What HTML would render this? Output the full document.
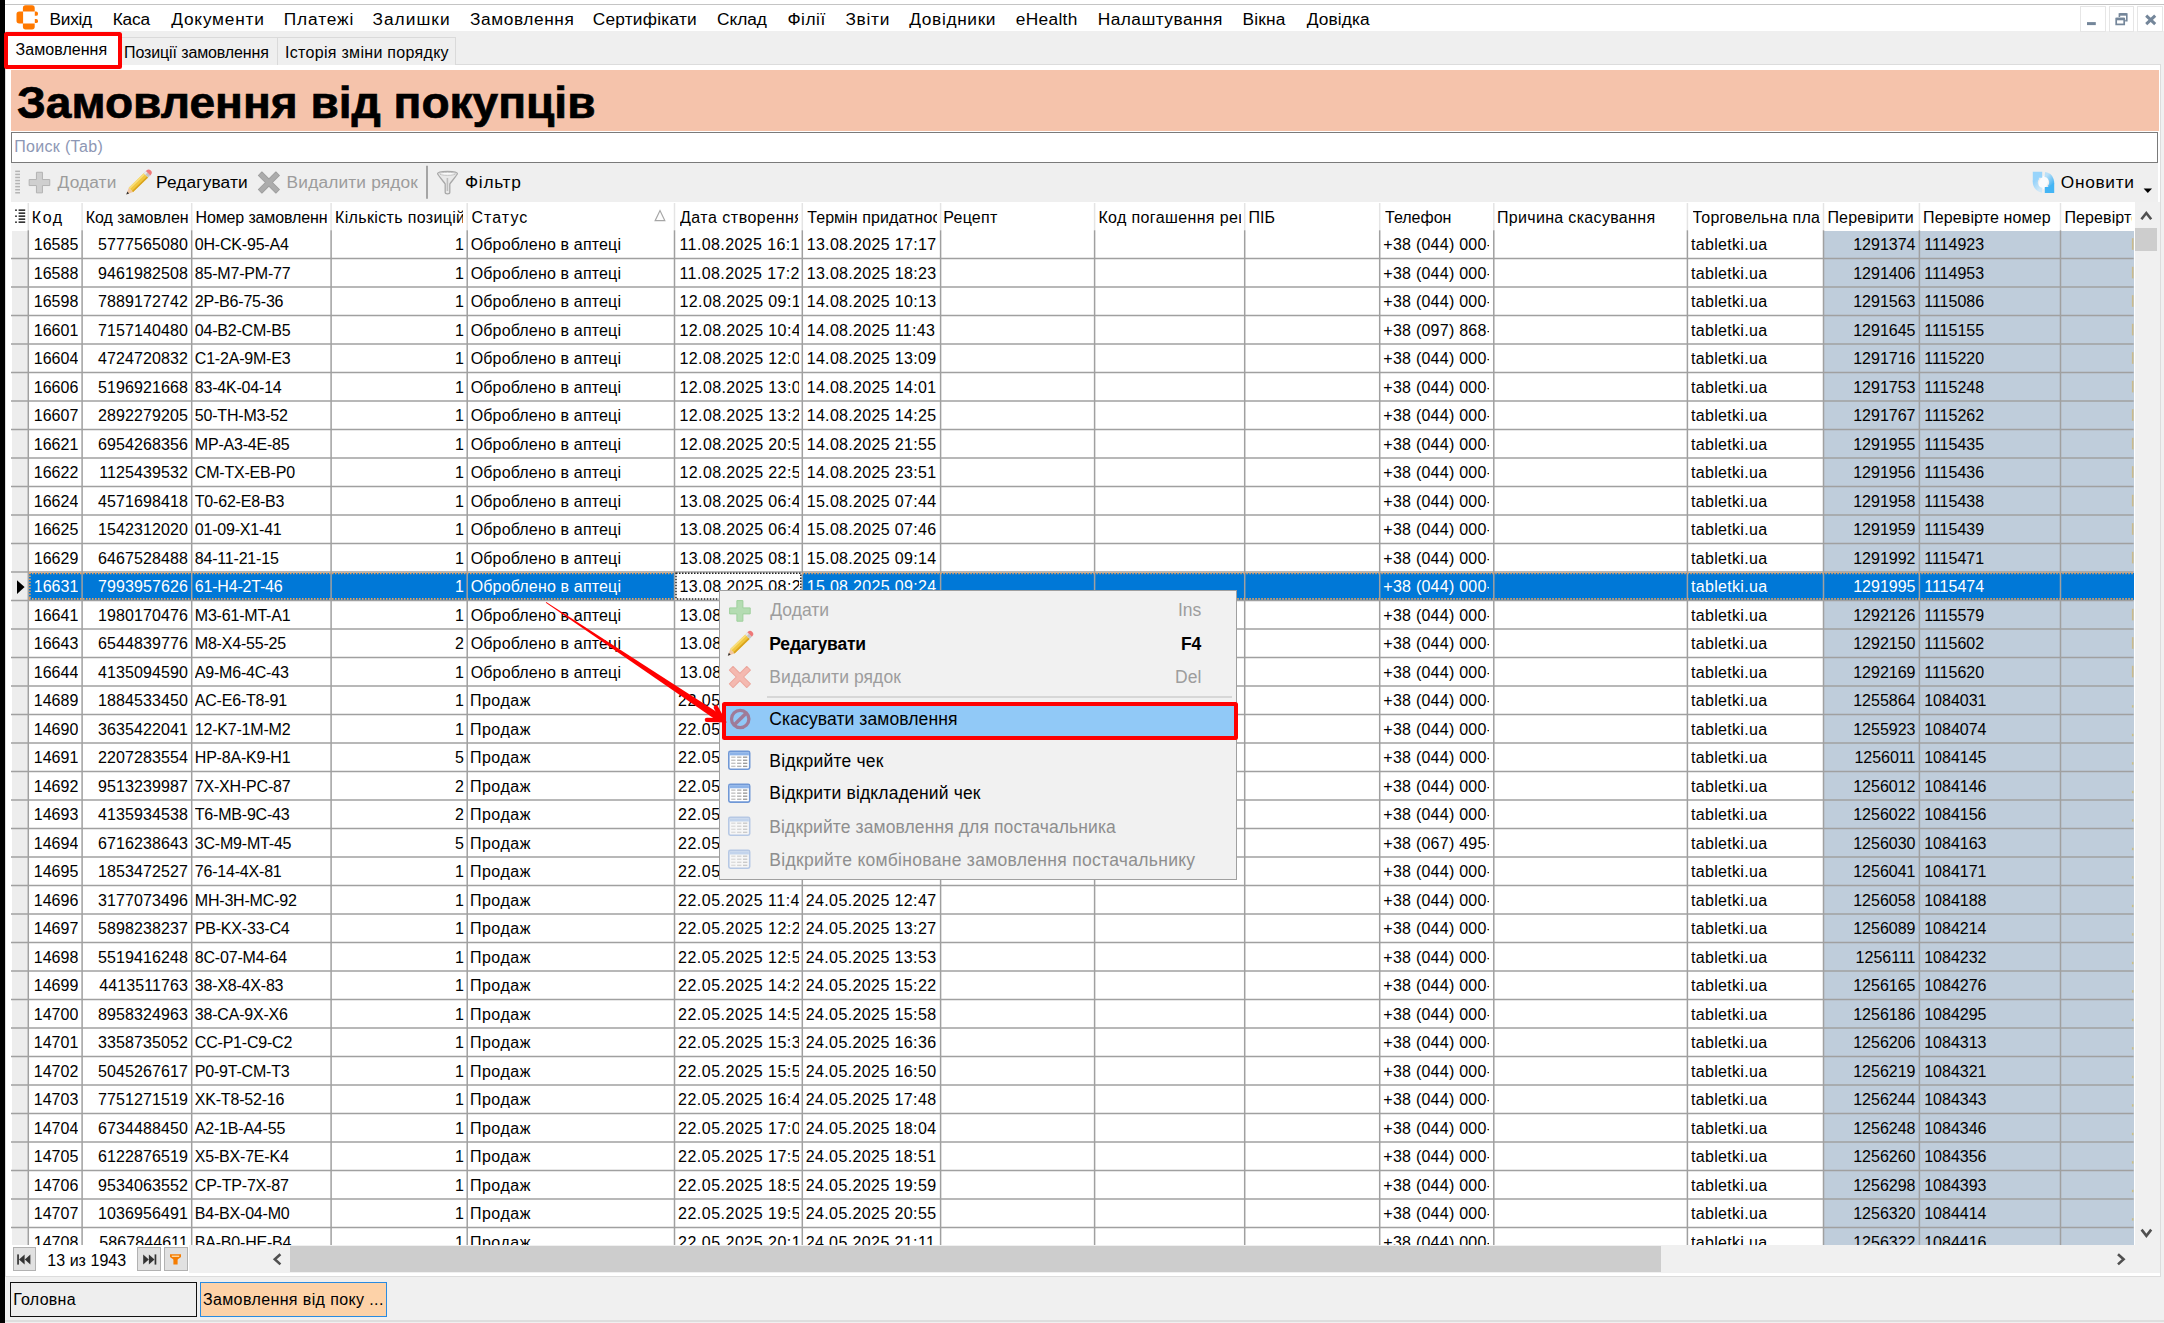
<!DOCTYPE html>
<html lang="uk"><head><meta charset="utf-8"><title>Замовлення від покупців</title>
<style>
html,body{margin:0;padding:0}
body{width:2164px;height:1323px;overflow:hidden;position:relative;background:#f0f0f0;font-family:"Liberation Sans",sans-serif;font-size:16px;color:#000}
.a{position:absolute}
.t{position:absolute;white-space:pre;line-height:20px}
/* top menu */
.mi{position:absolute;top:8px;font-size:17.3px;line-height:22px;white-space:pre;color:#000}
/* toolbar */
.tb{position:absolute;top:171px;font-size:17.3px;line-height:22px;white-space:pre}
/* grid */
.hd{position:absolute;top:205px;height:26px;line-height:26px;font-size:16px;white-space:pre;overflow:hidden}
.r{position:absolute;left:0;width:2134px;height:28.5px}
.r span{position:absolute;top:0.4px;height:28.5px;line-height:28px;font-size:16px;white-space:pre;overflow:hidden}
.r.s span{color:#fff}
.r .k0{left:31.30px;width:47.00px;text-align:right}
.r .k1{left:85.10px;width:102.80px;text-align:right;letter-spacing:0.08px}
.r .k2{left:194.80px;width:132.70px;text-align:left;letter-spacing:-0.20px}
.r .k3{left:334.10px;width:129.90px;text-align:right}
.r .k4{left:470.70px;width:200.20px;text-align:left;letter-spacing:0.16px}
.r .k5{left:679.50px;width:119.80px;text-align:left;letter-spacing:0.39px}
.r .k6{left:806.70px;width:130.30px;text-align:left;letter-spacing:0.32px}
.r .k10{left:1383.30px;width:106.10px;text-align:left;letter-spacing:0.25px}
.r .k12{left:1691.00px;width:128.90px;text-align:left;letter-spacing:0.31px}
.r .k13{left:1826.50px;width:89.00px;text-align:right}
.r .k14{left:1924.20px;width:132.70px;text-align:left}
.r .p{letter-spacing:0.54px;margin-left:-0.8px}
.r .d5{margin-left:-1.5px;width:121.3px;letter-spacing:0.5px}
.r .d6{margin-left:-1px;width:131.3px;letter-spacing:0.39px}
/* context menu */
.cm{position:absolute;font-size:17.5px;line-height:22px;white-space:pre}
</style></head><body>
<div class="a" style="left:0;top:0;width:5.2px;height:1323px;background:#000"></div>
<div class="a" style="left:5.2px;top:0;width:2159px;height:31.3px;background:#fff"></div>
<div class="a" style="left:5.2px;top:3.7px;width:2159px;height:1.4px;background:#c4c4c4"></div>
<div class="a" style="left:5.2px;top:31.3px;width:2159px;height:34px;background:#efefef"></div>
<div class="a" style="left:5.2px;top:64px;width:2154px;height:1211.4px;background:#fff;border:1.5px solid #dcdcdc"></div>
<div class="a" style="left:119px;top:37px;width:158.6px;height:28px;border:1.5px solid #dadada;border-bottom:none;box-sizing:border-box;background:#efefef"></div>
<div class="a" style="left:277.6px;top:37px;width:178.4px;height:28px;border:1.5px solid #dadada;border-left:none;border-bottom:none;box-sizing:border-box;background:#efefef"></div>
<div class="a" style="left:8px;top:35px;width:111px;height:31px;background:#fff"></div>
<div class="t" style="left:15.60px;letter-spacing:0.044px;top:39.5px;">Замовлення</div>
<div class="t" style="left:124.00px;letter-spacing:-0.118px;top:42.5px;">Позиції замовлення</div>
<div class="t" style="left:285.00px;letter-spacing:0.300px;top:42.5px;">Історія зміни порядку</div>
<div class="a" style="left:4.2px;top:32.2px;width:117.8px;height:36.8px;box-sizing:border-box;border:4.2px solid #ff0000;border-radius:2.5px"></div>
<svg class="a" style="left:14px;top:3px" width="28" height="30" viewBox="14 3 28 30"><g fill="#ff7900">
<path d="M22.9 11.4V8a2.7 2.7 0 0 1 2.7-2.7h6.4a2.7 2.7 0 0 1 2.7 2.7v3.4z"/>
<path d="M23.1 11.4h-3.9a2.7 2.7 0 0 0-2.7 2.7v6.6a2.7 2.7 0 0 0 2.7 2.7h3.9z"/>
<path d="M22.9 23.5h11.8v3.2a2.7 2.7 0 0 1-2.7 2.7h-6.4a2.7 2.7 0 0 1-2.7-2.7z"/>
<path d="M34.8 11.6h1.3a1.9 1.9 0 0 1 1.9 1.9v0.4a1.9 1.9 0 0 1-1.9 1.9h-1.3z"/>
<path d="M34.8 19.1h1.3a1.9 1.9 0 0 1 1.9 1.9v0.2a1.9 1.9 0 0 1-1.9 1.9h-1.3z"/>
</g></svg>
<div class="mi" style="left:49.50px;letter-spacing:-0.275px;">Вихід</div>
<div class="mi" style="left:112.70px;letter-spacing:-0.167px;">Каса</div>
<div class="mi" style="left:171.30px;letter-spacing:0.775px;">Документи</div>
<div class="mi" style="left:283.80px;letter-spacing:0.867px;">Платежі</div>
<div class="mi" style="left:372.40px;letter-spacing:1.050px;">Залишки</div>
<div class="mi" style="left:470.00px;letter-spacing:0.589px;">Замовлення</div>
<div class="mi" style="left:592.70px;letter-spacing:0.230px;">Сертифікати</div>
<div class="mi" style="left:717.00px;letter-spacing:-0.050px;">Склад</div>
<div class="mi" style="left:787.40px;letter-spacing:0.550px;">Філії</div>
<div class="mi" style="left:845.40px;letter-spacing:0.725px;">Звіти</div>
<div class="mi" style="left:909.30px;letter-spacing:0.650px;">Довідники</div>
<div class="mi" style="left:1015.70px;letter-spacing:0.350px;">eHealth</div>
<div class="mi" style="left:1097.70px;letter-spacing:0.482px;">Налаштування</div>
<div class="mi" style="left:1242.40px;letter-spacing:0.250px;">Вікна</div>
<div class="mi" style="left:1306.70px;letter-spacing:0.133px;">Довідка</div>
<div class="a" style="left:2080.2px;top:5.8px;width:25.4px;height:26.2px;box-sizing:border-box;border:1.5px solid #e6e6e6;background:#fff"></div>
<div class="a" style="left:2108.6px;top:5.8px;width:25.4px;height:26.2px;box-sizing:border-box;border:1.5px solid #e6e6e6;background:#fff"></div>
<div class="a" style="left:2137.2px;top:5.8px;width:25.4px;height:26.2px;box-sizing:border-box;border:1.5px solid #e6e6e6;background:#fff"></div>
<svg class="a" style="left:2080px;top:6px" width="84" height="27" viewBox="2080 6 84 27"><g fill="none" stroke="#74869a">
<path d="M2087 23.6h8.8" stroke-width="3"/>
<path d="M2119.4 17v-3h7.4v6.6h-1.6" stroke-width="1.6"/><path d="M2119.4 14.4h7.4" stroke-width="2.6"/>
<rect x="2116.2" y="18.6" width="8" height="5.8" stroke-width="1.7"/><path d="M2116.2 19h8" stroke-width="2.6"/>
<path d="M2146.2 15.6l9 8.6M2155.2 15.6l-9 8.6" stroke-width="3"/>
</g></svg>
<div class="a" style="left:11.2px;top:70.2px;width:2147.6px;height:61px;background:#f5c3ab"></div>
<div class="a" id="ttl" style="left:17px;top:79.1px;font-size:44px;line-height:48px;font-weight:bold;white-space:pre;transform-origin:0 0;transform:scaleX(1.047);-webkit-text-stroke:0.7px #000">Замовлення від покупців</div>
<div class="a" style="left:11.2px;top:131.6px;width:2147.2px;height:31.2px;box-sizing:border-box;border:1.6px solid #7a7a7a;background:#fff"></div>
<div class="t" style="left:14.20px;letter-spacing:0.330px;top:137px;color:#8d97b4;">Поиск (Tab)</div>
<div class="a" style="left:11.2px;top:162.8px;width:2147.2px;height:39.2px;background:#efefef"></div>
<svg class="a" style="left:11px;top:163px" width="520" height="39" viewBox="11 163 520 39">
<rect x="15.2" y="170.60" width="4.8" height="1.5" fill="#b4b4b4"/><rect x="15.2" y="173.66" width="4.8" height="1.5" fill="#b4b4b4"/><rect x="15.2" y="176.72" width="4.8" height="1.5" fill="#b4b4b4"/><rect x="15.2" y="179.78" width="4.8" height="1.5" fill="#b4b4b4"/><rect x="15.2" y="182.84" width="4.8" height="1.5" fill="#b4b4b4"/><rect x="15.2" y="185.90" width="4.8" height="1.5" fill="#b4b4b4"/><rect x="15.2" y="188.96" width="4.8" height="1.5" fill="#b4b4b4"/><rect x="15.2" y="192.02" width="4.8" height="1.5" fill="#b4b4b4"/><g transform="translate(39.45,182.55) rotate(0)"><path d="M-3.00 -10.30h6.00v7.30h7.30v6.00h-7.30v7.30h-6.00v-7.30h-7.30v-6.00h7.30z" fill="#cfcfcf" stroke="#b3b3b3" stroke-width="1.0" stroke-linejoin="round"/></g><g transform="translate(126.30,194.40) rotate(-44.17)"><path d="M0 0L6.49 -3.10L6.49 3.10Z" fill="#f1c6a2"/><path d="M0 0L2.73 -1.30L2.73 1.30Z" fill="#333"/><rect x="6.49" y="-3.10" width="20.84" height="6.20" fill="#f1c73f"/><rect x="6.49" y="-3.10" width="20.84" height="1.86" fill="#f8de7c"/><rect x="6.49" y="1.49" width="20.84" height="1.61" fill="#d8a21e"/><rect x="27.33" y="-3.10" width="3.07" height="6.20" fill="#c4c4c4"/><rect x="27.33" y="-3.10" width="3.07" height="2.17" fill="#e8e8e8"/><path d="M30.40 -3.10H31.06a3.10 3.10 0 0 1 0 6.20H30.40z" fill="#ee7878"/></g><g transform="translate(268.90,182.50) rotate(45)"><path d="M-2.50 -12.40h5.00v9.90h9.90v5.00h-9.90v9.90h-5.00v-9.90h-9.90v-5.00h9.90z" fill="#acacac" stroke="#9e9e9e" stroke-width="1.0" stroke-linejoin="round"/></g><path d="M427 165.8v33" stroke="#8c8c8c" stroke-width="1.5"/><path d="M437.6 173.6c0-3 19.8-3 19.8 0c0 1.6-7 9-7.6 10.4v8.6c0 1.6-4.6 1.6-4.6 0v-8.6c-0.6-1.4-7.6-8.8-7.6-10.4z" fill="#e9e9e9" stroke="#a8a8a8" stroke-width="1.3"/><ellipse cx="447.5" cy="173.8" rx="8" ry="1.5" fill="#fafafa" stroke="#b8b8b8" stroke-width="0.8"/><path d="M447.4 178v13" stroke="#bdbdbd" stroke-width="1.6"/></svg>
<div class="tb" style="left:57.60px;letter-spacing:0.140px;color:#9c9c9c;">Додати</div>
<div class="tb" style="left:156.00px;letter-spacing:0.133px;">Редагувати</div>
<div class="tb" style="left:286.60px;letter-spacing:0.177px;color:#9c9c9c;">Видалити рядок</div>
<div class="tb" style="left:465.00px;letter-spacing:0.700px;">Фільтр</div>
<div class="tb" style="left:2060.80px;letter-spacing:0.700px;">Оновити</div>
<svg class="a" style="left:2030px;top:168px" width="128" height="30" viewBox="2030 168 128 30">
<defs><linearGradient id="rg1" x1="0" y1="0" x2="0.6" y2="1"><stop offset="0" stop-color="#8ccffb"/><stop offset="1" stop-color="#cfe8f8"/></linearGradient>
<linearGradient id="rg2" x1="0.4" y1="0" x2="1" y2="1"><stop offset="0" stop-color="#b9e0f8"/><stop offset="1" stop-color="#3aaff2"/></linearGradient></defs>
<ellipse cx="2043.5" cy="182.4" rx="4.2" ry="7.2" transform="rotate(18 2043.5 182.4)" fill="#fafcfe"/>
<g fill="none">
<path d="M2042.2 190.2a7.8 7.8 0 0 1-4.6-13.2" stroke="url(#rg1)" stroke-width="5"/>
<path d="M2044.8 174.6a7.8 7.8 0 0 1 4.6 13.2" stroke="url(#rg2)" stroke-width="5"/>
</g>
<path d="M2032.8 171.8h9.4v6h-3.4l-6 4z" fill="#98d4fb"/>
<path d="M2054.2 193h-9.4v-6h3.4l6-4z" fill="#43b5f5"/>
<path d="M2143.6 188.6h8.4l-4.2 4.5z" fill="#000"/>
</svg>
<div class="a" style="left:11.0px;top:202.0px;width:2122.6px;height:1043.0px;background:#fff"></div>
<div class="a" style="left:12.2px;top:231.25px;width:15.4px;height:1013.75px;background:#ededed"></div>
<div class="a" style="left:1823.50px;top:230.65px;width:310.10px;height:1014.35px;background:#bfcddb"></div>
<div class="a" style="left:29.00px;top:572.50px;width:2104.60px;height:27.30px;background:#0078d7"></div>
<div class="a" style="left:675.20px;top:572.50px;width:126.40px;height:27.30px;background:#fff"></div>
<svg class="a" style="left:0;top:200px" width="2164" height="1046" viewBox="0 200 2164 1046">
<g stroke="#e4e4e4" stroke-width="1.5"><path d="M28.30 203.0V230.2"/><path d="M82.10 203.0V230.2"/><path d="M191.70 203.0V230.2"/><path d="M331.10 203.0V230.2"/><path d="M467.20 203.0V230.2"/><path d="M674.50 203.0V230.2"/><path d="M802.30 203.0V230.2"/><path d="M940.60 203.0V230.2"/><path d="M1094.60 203.0V230.2"/><path d="M1244.70 203.0V230.2"/><path d="M1379.70 203.0V230.2"/><path d="M1493.80 203.0V230.2"/><path d="M1687.40 203.0V230.2"/><path d="M1823.50 203.0V230.2"/><path d="M1919.40 203.0V230.2"/><path d="M2060.50 203.0V230.2"/></g>
<g stroke="#a0a0a0" stroke-width="1.5"><path d="M28.30 230.35V1245.0"/><path d="M82.10 230.35V1245.0"/><path d="M191.70 230.35V1245.0"/><path d="M331.10 230.35V1245.0"/><path d="M467.20 230.35V1245.0"/><path d="M674.50 230.35V1245.0"/><path d="M802.30 230.35V1245.0"/><path d="M940.60 230.35V1245.0"/><path d="M1094.60 230.35V1245.0"/><path d="M1244.70 230.35V1245.0"/><path d="M1379.70 230.35V1245.0"/><path d="M1493.80 230.35V1245.0"/><path d="M1687.40 230.35V1245.0"/><path d="M1823.50 230.35V1245.0"/><path d="M1919.40 230.35V1245.0"/><path d="M2060.50 230.35V1245.0"/><path d="M11.0 258.40H2133.6"/><path d="M11.0 286.90H2133.6"/><path d="M11.0 315.40H2133.6"/><path d="M11.0 343.90H2133.6"/><path d="M11.0 372.40H2133.6"/><path d="M11.0 400.90H2133.6"/><path d="M11.0 429.40H2133.6"/><path d="M11.0 457.90H2133.6"/><path d="M11.0 486.40H2133.6"/><path d="M11.0 514.90H2133.6"/><path d="M11.0 543.40H2133.6"/><path d="M11.0 571.90H2133.6"/><path d="M11.0 600.40H2133.6"/><path d="M11.0 628.90H2133.6"/><path d="M11.0 657.40H2133.6"/><path d="M11.0 685.90H2133.6"/><path d="M11.0 714.40H2133.6"/><path d="M11.0 742.90H2133.6"/><path d="M11.0 771.40H2133.6"/><path d="M11.0 799.90H2133.6"/><path d="M11.0 828.40H2133.6"/><path d="M11.0 856.90H2133.6"/><path d="M11.0 885.40H2133.6"/><path d="M11.0 913.90H2133.6"/><path d="M11.0 942.40H2133.6"/><path d="M11.0 970.90H2133.6"/><path d="M11.0 999.40H2133.6"/><path d="M11.0 1027.90H2133.6"/><path d="M11.0 1056.40H2133.6"/><path d="M11.0 1084.90H2133.6"/><path d="M11.0 1113.40H2133.6"/><path d="M11.0 1141.90H2133.6"/><path d="M11.0 1170.40H2133.6"/><path d="M11.0 1198.90H2133.6"/><path d="M11.0 1227.40H2133.6"/></g>
<g stroke="#f0a25a" stroke-width="1.6" stroke-dasharray="1.5 1.5" fill="none"><path d="M29.00 573.40H674.5"/><path d="M802.30 573.40H2133.6"/><path d="M29.00 598.90H674.5"/><path d="M802.30 598.90H2133.6"/><path d="M29.90 572.50V599.80"/></g><g stroke="#222" stroke-width="1.5" stroke-dasharray="1.5 1.5" fill="none"><rect x="676.00" y="573.30" width="124.80" height="25.70"/></g><path d="M17 580.20L24.6 587.10L17 594.00z" fill="#000"/><rect x="18.6" y="209.4" width="6.6" height="1.5" fill="#222"/><rect x="15.2" y="209.4" width="1.6" height="1.6" fill="#222"/><rect x="18.6" y="212.4" width="6.6" height="1.5" fill="#222"/><rect x="18.6" y="215.4" width="6.6" height="1.5" fill="#222"/><rect x="15.2" y="215.4" width="1.6" height="1.6" fill="#222"/><rect x="18.6" y="218.4" width="6.6" height="1.5" fill="#222"/><rect x="18.6" y="221.4" width="6.6" height="1.5" fill="#222"/><rect x="15.2" y="221.4" width="1.6" height="1.6" fill="#222"/><path d="M655.2 220.6L660 210.6L664.8 220.6z" fill="#fdfdfd" stroke="#a6a6a6" stroke-width="1.2"/></svg>
<div class="hd" style="left:31.70px;width:46.50px;letter-spacing:1.650px;">Код</div>
<div class="hd" style="left:85.70px;width:102.10px;letter-spacing:-0.000px;">Код замовлення</div>
<div class="hd" style="left:195.50px;width:131.70px;letter-spacing:-0.136px;">Номер замовлення</div>
<div class="hd" style="left:335.00px;width:128.30px;letter-spacing:0.344px;">Кількість позицій</div>
<div class="hd" style="left:471.40px;width:199.20px;letter-spacing:1.060px;">Статус</div>
<div class="hd" style="left:680.00px;width:118.40px;letter-spacing:0.492px;">Дата створення</div>
<div class="hd" style="left:807.20px;width:129.50px;letter-spacing:0.086px;">Термін придатності</div>
<div class="hd" style="left:943.30px;width:147.40px;letter-spacing:0.240px;">Рецепт</div>
<div class="hd" style="left:1098.40px;width:142.40px;letter-spacing:0.373px;">Код погашення рецепта</div>
<div class="hd" style="left:1248.60px;width:127.20px;letter-spacing:-0.050px;">ПІБ</div>
<div class="hd" style="left:1385.00px;width:104.90px;letter-spacing:0.000px;">Телефон</div>
<div class="hd" style="left:1496.90px;width:186.60px;letter-spacing:0.329px;">Причина скасування</div>
<div class="hd" style="left:1692.50px;width:127.10px;letter-spacing:0.229px;">Торговельна платформа</div>
<div class="hd" style="left:1827.40px;width:88.10px;letter-spacing:0.211px;">Перевірити</div>
<div class="hd" style="left:1923.10px;width:133.50px;letter-spacing:0.121px;">Перевірте номер</div>
<div class="hd" style="left:2064.40px;width:67.60px;letter-spacing:0.114px;">Перевірте статус</div>
<div class="r" style="top:230.65px"><span class="k0">16585</span><span class="k1">5777565080</span><span class="k2">0H-CK-95-A4</span><span class="k3">1</span><span class="k4">Оброблено в аптеці</span><span class="k5">11.08.2025 16:1</span><span class="k6">13.08.2025 17:17</span><span class="k10">+38 (044) 000-</span><span class="k12">tabletki.ua</span><span class="k13">1291374</span><span class="k14">1114923</span></div>
<div class="r" style="top:259.15px"><span class="k0">16588</span><span class="k1">9461982508</span><span class="k2">85-M7-PM-77</span><span class="k3">1</span><span class="k4">Оброблено в аптеці</span><span class="k5">11.08.2025 17:2</span><span class="k6">13.08.2025 18:23</span><span class="k10">+38 (044) 000-</span><span class="k12">tabletki.ua</span><span class="k13">1291406</span><span class="k14">1114953</span></div>
<div class="r" style="top:287.65px"><span class="k0">16598</span><span class="k1">7889172742</span><span class="k2">2P-B6-75-36</span><span class="k3">1</span><span class="k4">Оброблено в аптеці</span><span class="k5">12.08.2025 09:1</span><span class="k6">14.08.2025 10:13</span><span class="k10">+38 (044) 000-</span><span class="k12">tabletki.ua</span><span class="k13">1291563</span><span class="k14">1115086</span></div>
<div class="r" style="top:316.15px"><span class="k0">16601</span><span class="k1">7157140480</span><span class="k2">04-B2-CM-B5</span><span class="k3">1</span><span class="k4">Оброблено в аптеці</span><span class="k5">12.08.2025 10:4</span><span class="k6">14.08.2025 11:43</span><span class="k10">+38 (097) 868-</span><span class="k12">tabletki.ua</span><span class="k13">1291645</span><span class="k14">1115155</span></div>
<div class="r" style="top:344.65px"><span class="k0">16604</span><span class="k1">4724720832</span><span class="k2">C1-2A-9M-E3</span><span class="k3">1</span><span class="k4">Оброблено в аптеці</span><span class="k5">12.08.2025 12:0</span><span class="k6">14.08.2025 13:09</span><span class="k10">+38 (044) 000-</span><span class="k12">tabletki.ua</span><span class="k13">1291716</span><span class="k14">1115220</span></div>
<div class="r" style="top:373.15px"><span class="k0">16606</span><span class="k1">5196921668</span><span class="k2">83-4K-04-14</span><span class="k3">1</span><span class="k4">Оброблено в аптеці</span><span class="k5">12.08.2025 13:0</span><span class="k6">14.08.2025 14:01</span><span class="k10">+38 (044) 000-</span><span class="k12">tabletki.ua</span><span class="k13">1291753</span><span class="k14">1115248</span></div>
<div class="r" style="top:401.65px"><span class="k0">16607</span><span class="k1">2892279205</span><span class="k2">50-TH-M3-52</span><span class="k3">1</span><span class="k4">Оброблено в аптеці</span><span class="k5">12.08.2025 13:2</span><span class="k6">14.08.2025 14:25</span><span class="k10">+38 (044) 000-</span><span class="k12">tabletki.ua</span><span class="k13">1291767</span><span class="k14">1115262</span></div>
<div class="r" style="top:430.15px"><span class="k0">16621</span><span class="k1">6954268356</span><span class="k2">MP-A3-4E-85</span><span class="k3">1</span><span class="k4">Оброблено в аптеці</span><span class="k5">12.08.2025 20:5</span><span class="k6">14.08.2025 21:55</span><span class="k10">+38 (044) 000-</span><span class="k12">tabletki.ua</span><span class="k13">1291955</span><span class="k14">1115435</span></div>
<div class="r" style="top:458.65px"><span class="k0">16622</span><span class="k1">1125439532</span><span class="k2">CM-TX-EB-P0</span><span class="k3">1</span><span class="k4">Оброблено в аптеці</span><span class="k5">12.08.2025 22:5</span><span class="k6">14.08.2025 23:51</span><span class="k10">+38 (044) 000-</span><span class="k12">tabletki.ua</span><span class="k13">1291956</span><span class="k14">1115436</span></div>
<div class="r" style="top:487.15px"><span class="k0">16624</span><span class="k1">4571698418</span><span class="k2">T0-62-E8-B3</span><span class="k3">1</span><span class="k4">Оброблено в аптеці</span><span class="k5">13.08.2025 06:4</span><span class="k6">15.08.2025 07:44</span><span class="k10">+38 (044) 000-</span><span class="k12">tabletki.ua</span><span class="k13">1291958</span><span class="k14">1115438</span></div>
<div class="r" style="top:515.65px"><span class="k0">16625</span><span class="k1">1542312020</span><span class="k2">01-09-X1-41</span><span class="k3">1</span><span class="k4">Оброблено в аптеці</span><span class="k5">13.08.2025 06:4</span><span class="k6">15.08.2025 07:46</span><span class="k10">+38 (044) 000-</span><span class="k12">tabletki.ua</span><span class="k13">1291959</span><span class="k14">1115439</span></div>
<div class="r" style="top:544.15px"><span class="k0">16629</span><span class="k1">6467528488</span><span class="k2">84-11-21-15</span><span class="k3">1</span><span class="k4">Оброблено в аптеці</span><span class="k5">13.08.2025 08:1</span><span class="k6">15.08.2025 09:14</span><span class="k10">+38 (044) 000-</span><span class="k12">tabletki.ua</span><span class="k13">1291992</span><span class="k14">1115471</span></div>
<div class="r s" style="top:572.65px"><span class="k0">16631</span><span class="k1">7993957626</span><span class="k2">61-H4-2T-46</span><span class="k3">1</span><span class="k4">Оброблено в аптеці</span><span class="k5" style="color:#000">13.08.2025 08:2</span><span class="k6">15.08.2025 09:24</span><span class="k10">+38 (044) 000-</span><span class="k12">tabletki.ua</span><span class="k13">1291995</span><span class="k14">1115474</span></div>
<div class="r" style="top:601.15px"><span class="k0">16641</span><span class="k1">1980170476</span><span class="k2">M3-61-MT-A1</span><span class="k3">1</span><span class="k4">Оброблено в аптеці</span><span class="k5">13.08.2025 09:4</span><span class="k6">15.08.2025 10:45</span><span class="k10">+38 (044) 000-</span><span class="k12">tabletki.ua</span><span class="k13">1292126</span><span class="k14">1115579</span></div>
<div class="r" style="top:629.65px"><span class="k0">16643</span><span class="k1">6544839776</span><span class="k2">M8-X4-55-25</span><span class="k3">2</span><span class="k4">Оброблено в аптеці</span><span class="k5">13.08.2025 10:0</span><span class="k6">15.08.2025 11:05</span><span class="k10">+38 (044) 000-</span><span class="k12">tabletki.ua</span><span class="k13">1292150</span><span class="k14">1115602</span></div>
<div class="r" style="top:658.15px"><span class="k0">16644</span><span class="k1">4135094590</span><span class="k2">A9-M6-4C-43</span><span class="k3">1</span><span class="k4">Оброблено в аптеці</span><span class="k5">13.08.2025 10:2</span><span class="k6">15.08.2025 11:21</span><span class="k10">+38 (044) 000-</span><span class="k12">tabletki.ua</span><span class="k13">1292169</span><span class="k14">1115620</span></div>
<div class="r" style="top:686.65px"><span class="k0">14689</span><span class="k1">1884533450</span><span class="k2">AC-E6-T8-91</span><span class="k3">1</span><span class="k4 p">Продаж</span><span class="k5 d5">22.05.2025 09:1</span><span class="k6 d6">24.05.2025 10:11</span><span class="k10">+38 (044) 000-</span><span class="k12">tabletki.ua</span><span class="k13">1255864</span><span class="k14">1084031</span></div>
<div class="r" style="top:715.15px"><span class="k0">14690</span><span class="k1">3635422041</span><span class="k2">12-K7-1M-M2</span><span class="k3">1</span><span class="k4 p">Продаж</span><span class="k5 d5">22.05.2025 09:4</span><span class="k6 d6">24.05.2025 10:46</span><span class="k10">+38 (044) 000-</span><span class="k12">tabletki.ua</span><span class="k13">1255923</span><span class="k14">1084074</span></div>
<div class="r" style="top:743.65px"><span class="k0">14691</span><span class="k1">2207283554</span><span class="k2">HP-8A-K9-H1</span><span class="k3">5</span><span class="k4 p">Продаж</span><span class="k5 d5">22.05.2025 10:3</span><span class="k6 d6">24.05.2025 11:31</span><span class="k10">+38 (044) 000-</span><span class="k12">tabletki.ua</span><span class="k13">1256011</span><span class="k14">1084145</span></div>
<div class="r" style="top:772.15px"><span class="k0">14692</span><span class="k1">9513239987</span><span class="k2">7X-XH-PC-87</span><span class="k3">2</span><span class="k4 p">Продаж</span><span class="k5 d5">22.05.2025 10:3</span><span class="k6 d6">24.05.2025 11:32</span><span class="k10">+38 (044) 000-</span><span class="k12">tabletki.ua</span><span class="k13">1256012</span><span class="k14">1084146</span></div>
<div class="r" style="top:800.65px"><span class="k0">14693</span><span class="k1">4135934538</span><span class="k2">T6-MB-9C-43</span><span class="k3">2</span><span class="k4 p">Продаж</span><span class="k5 d5">22.05.2025 10:3</span><span class="k6 d6">24.05.2025 11:38</span><span class="k10">+38 (044) 000-</span><span class="k12">tabletki.ua</span><span class="k13">1256022</span><span class="k14">1084156</span></div>
<div class="r" style="top:829.15px"><span class="k0">14694</span><span class="k1">6716238643</span><span class="k2">3C-M9-MT-45</span><span class="k3">5</span><span class="k4 p">Продаж</span><span class="k5 d5">22.05.2025 10:4</span><span class="k6 d6">24.05.2025 11:43</span><span class="k10">+38 (067) 495-</span><span class="k12">tabletki.ua</span><span class="k13">1256030</span><span class="k14">1084163</span></div>
<div class="r" style="top:857.65px"><span class="k0">14695</span><span class="k1">1853472527</span><span class="k2">76-14-4X-81</span><span class="k3">1</span><span class="k4 p">Продаж</span><span class="k5 d5">22.05.2025 10:5</span><span class="k6 d6">24.05.2025 11:50</span><span class="k10">+38 (044) 000-</span><span class="k12">tabletki.ua</span><span class="k13">1256041</span><span class="k14">1084171</span></div>
<div class="r" style="top:886.15px"><span class="k0">14696</span><span class="k1">3177073496</span><span class="k2">MH-3H-MC-92</span><span class="k3">1</span><span class="k4 p">Продаж</span><span class="k5 d5">22.05.2025 11:4</span><span class="k6 d6">24.05.2025 12:47</span><span class="k10">+38 (044) 000-</span><span class="k12">tabletki.ua</span><span class="k13">1256058</span><span class="k14">1084188</span></div>
<div class="r" style="top:914.65px"><span class="k0">14697</span><span class="k1">5898238237</span><span class="k2">PB-KX-33-C4</span><span class="k3">1</span><span class="k4 p">Продаж</span><span class="k5 d5">22.05.2025 12:2</span><span class="k6 d6">24.05.2025 13:27</span><span class="k10">+38 (044) 000-</span><span class="k12">tabletki.ua</span><span class="k13">1256089</span><span class="k14">1084214</span></div>
<div class="r" style="top:943.15px"><span class="k0">14698</span><span class="k1">5519416248</span><span class="k2">8C-07-M4-64</span><span class="k3">1</span><span class="k4 p">Продаж</span><span class="k5 d5">22.05.2025 12:5</span><span class="k6 d6">24.05.2025 13:53</span><span class="k10">+38 (044) 000-</span><span class="k12">tabletki.ua</span><span class="k13">1256111</span><span class="k14">1084232</span></div>
<div class="r" style="top:971.65px"><span class="k0">14699</span><span class="k1">4413511763</span><span class="k2">38-X8-4X-83</span><span class="k3">1</span><span class="k4 p">Продаж</span><span class="k5 d5">22.05.2025 14:2</span><span class="k6 d6">24.05.2025 15:22</span><span class="k10">+38 (044) 000-</span><span class="k12">tabletki.ua</span><span class="k13">1256165</span><span class="k14">1084276</span></div>
<div class="r" style="top:1000.15px"><span class="k0">14700</span><span class="k1">8958324963</span><span class="k2">38-CA-9X-X6</span><span class="k3">1</span><span class="k4 p">Продаж</span><span class="k5 d5">22.05.2025 14:5</span><span class="k6 d6">24.05.2025 15:58</span><span class="k10">+38 (044) 000-</span><span class="k12">tabletki.ua</span><span class="k13">1256186</span><span class="k14">1084295</span></div>
<div class="r" style="top:1028.65px"><span class="k0">14701</span><span class="k1">3358735052</span><span class="k2">CC-P1-C9-C2</span><span class="k3">1</span><span class="k4 p">Продаж</span><span class="k5 d5">22.05.2025 15:3</span><span class="k6 d6">24.05.2025 16:36</span><span class="k10">+38 (044) 000-</span><span class="k12">tabletki.ua</span><span class="k13">1256206</span><span class="k14">1084313</span></div>
<div class="r" style="top:1057.15px"><span class="k0">14702</span><span class="k1">5045267617</span><span class="k2">P0-9T-CM-T3</span><span class="k3">1</span><span class="k4 p">Продаж</span><span class="k5 d5">22.05.2025 15:5</span><span class="k6 d6">24.05.2025 16:50</span><span class="k10">+38 (044) 000-</span><span class="k12">tabletki.ua</span><span class="k13">1256219</span><span class="k14">1084321</span></div>
<div class="r" style="top:1085.65px"><span class="k0">14703</span><span class="k1">7751271519</span><span class="k2">XK-T8-52-16</span><span class="k3">1</span><span class="k4 p">Продаж</span><span class="k5 d5">22.05.2025 16:4</span><span class="k6 d6">24.05.2025 17:48</span><span class="k10">+38 (044) 000-</span><span class="k12">tabletki.ua</span><span class="k13">1256244</span><span class="k14">1084343</span></div>
<div class="r" style="top:1114.15px"><span class="k0">14704</span><span class="k1">6734488450</span><span class="k2">A2-1B-A4-55</span><span class="k3">1</span><span class="k4 p">Продаж</span><span class="k5 d5">22.05.2025 17:0</span><span class="k6 d6">24.05.2025 18:04</span><span class="k10">+38 (044) 000-</span><span class="k12">tabletki.ua</span><span class="k13">1256248</span><span class="k14">1084346</span></div>
<div class="r" style="top:1142.65px"><span class="k0">14705</span><span class="k1">6122876519</span><span class="k2">X5-BX-7E-K4</span><span class="k3">1</span><span class="k4 p">Продаж</span><span class="k5 d5">22.05.2025 17:5</span><span class="k6 d6">24.05.2025 18:51</span><span class="k10">+38 (044) 000-</span><span class="k12">tabletki.ua</span><span class="k13">1256260</span><span class="k14">1084356</span></div>
<div class="r" style="top:1171.15px"><span class="k0">14706</span><span class="k1">9534063552</span><span class="k2">CP-TP-7X-87</span><span class="k3">1</span><span class="k4 p">Продаж</span><span class="k5 d5">22.05.2025 18:5</span><span class="k6 d6">24.05.2025 19:59</span><span class="k10">+38 (044) 000-</span><span class="k12">tabletki.ua</span><span class="k13">1256298</span><span class="k14">1084393</span></div>
<div class="r" style="top:1199.65px"><span class="k0">14707</span><span class="k1">1036956491</span><span class="k2">B4-BX-04-M0</span><span class="k3">1</span><span class="k4 p">Продаж</span><span class="k5 d5">22.05.2025 19:5</span><span class="k6 d6">24.05.2025 20:55</span><span class="k10">+38 (044) 000-</span><span class="k12">tabletki.ua</span><span class="k13">1256320</span><span class="k14">1084414</span></div>
<div class="r" style="top:1228.15px;height:16.85px;overflow:hidden"><span class="k0">14708</span><span class="k1">5867844611</span><span class="k2">BA-B0-HE-B4</span><span class="k3">1</span><span class="k4 p">Продаж</span><span class="k5 d5">22.05.2025 20:1</span><span class="k6 d6">24.05.2025 21:11</span><span class="k10">+38 (044) 000-</span><span class="k12">tabletki.ua</span><span class="k13">1256322</span><span class="k14">1084416</span></div>
<svg class="a" style="left:2128px;top:230px" width="6" height="1015" viewBox="2128 230 6 1015"><rect x="2131.9" y="238.2" width="1.6" height="11.6" fill="#cbbb8c"/><rect x="2131.9" y="266.8" width="1.6" height="11.6" fill="#cbbb8c"/><rect x="2131.9" y="295.2" width="1.6" height="11.6" fill="#cbbb8c"/><rect x="2131.9" y="323.8" width="1.6" height="11.6" fill="#cbbb8c"/><rect x="2131.9" y="352.2" width="1.6" height="11.6" fill="#cbbb8c"/><rect x="2131.9" y="380.8" width="1.6" height="11.6" fill="#cbbb8c"/><rect x="2131.9" y="409.2" width="1.6" height="11.6" fill="#cbbb8c"/><rect x="2131.9" y="437.8" width="1.6" height="11.6" fill="#cbbb8c"/><rect x="2131.9" y="466.2" width="1.6" height="11.6" fill="#cbbb8c"/><rect x="2131.9" y="494.8" width="1.6" height="11.6" fill="#cbbb8c"/><rect x="2131.9" y="523.2" width="1.6" height="11.6" fill="#cbbb8c"/><rect x="2131.9" y="551.8" width="1.6" height="11.6" fill="#cbbb8c"/><rect x="2131.9" y="608.8" width="1.6" height="11.6" fill="#cbbb8c"/><rect x="2131.9" y="637.2" width="1.6" height="11.6" fill="#cbbb8c"/><rect x="2131.9" y="665.8" width="1.6" height="11.6" fill="#cbbb8c"/><rect x="2131.9" y="705.2" width="1.6" height="2.4" fill="#cbbf86"/><rect x="2131.9" y="733.8" width="1.6" height="2.4" fill="#cbbf86"/><rect x="2131.9" y="762.2" width="1.6" height="2.4" fill="#cbbf86"/><rect x="2131.9" y="790.8" width="1.6" height="2.4" fill="#cbbf86"/><rect x="2131.9" y="819.2" width="1.6" height="2.4" fill="#cbbf86"/><rect x="2131.9" y="847.8" width="1.6" height="2.4" fill="#cbbf86"/><rect x="2131.9" y="876.2" width="1.6" height="2.4" fill="#cbbf86"/><rect x="2131.9" y="904.8" width="1.6" height="2.4" fill="#cbbf86"/><rect x="2131.9" y="933.2" width="1.6" height="2.4" fill="#cbbf86"/><rect x="2131.9" y="961.8" width="1.6" height="2.4" fill="#cbbf86"/><rect x="2131.9" y="990.2" width="1.6" height="2.4" fill="#cbbf86"/><rect x="2131.9" y="1018.8" width="1.6" height="2.4" fill="#cbbf86"/><rect x="2131.9" y="1047.2" width="1.6" height="2.4" fill="#cbbf86"/><rect x="2131.9" y="1075.8" width="1.6" height="2.4" fill="#cbbf86"/><rect x="2131.9" y="1104.2" width="1.6" height="2.4" fill="#cbbf86"/><rect x="2131.9" y="1132.8" width="1.6" height="2.4" fill="#cbbf86"/><rect x="2131.9" y="1161.2" width="1.6" height="2.4" fill="#cbbf86"/><rect x="2131.9" y="1189.8" width="1.6" height="2.4" fill="#cbbf86"/><rect x="2131.9" y="1218.2" width="1.6" height="2.4" fill="#cbbf86"/></svg>
<div class="a" style="left:2133.6px;top:202px;width:1.6px;height:1043px;background:#fff"></div>
<div class="a" style="left:2135.1px;top:202px;width:24.6px;height:1043px;background:#f0f0f0"></div>
<div class="a" style="left:2135.4px;top:228.2px;width:21.8px;height:22.6px;background:#cdcdcd"></div>
<svg class="a" style="left:2136px;top:206px" width="22" height="1040" viewBox="2136 206 22 1040"><g fill="none" stroke="#505050" stroke-width="2.6"><path d="M2141.4 219.2l4.9-6.2l4.9 6.2"/><path d="M2141.6 1229.6l4.8 6.2l4.8-6.2"/></g></svg>
<div class="a" style="left:188.6px;top:1245.0px;width:1971.1px;height:28.4px;background:#f0f0f0"></div>
<div class="a" style="left:290px;top:1246.4px;width:1371px;height:25.6px;background:#cdcdcd"></div>
<div class="a" style="left:12.8px;top:1247.2px;width:23.4px;height:24.3px;box-sizing:border-box;border:1.5px solid #b2b2b2;background:#e1e1e1"></div>
<div class="a" style="left:137.1px;top:1247.2px;width:23.7px;height:24.3px;box-sizing:border-box;border:1.5px solid #b2b2b2;background:#e1e1e1"></div>
<div class="a" style="left:164.1px;top:1247.2px;width:23.7px;height:24.3px;box-sizing:border-box;border:1.5px solid #b2b2b2;background:#e1e1e1"></div>
<svg class="a" style="left:11px;top:1246px" width="2150" height="28" viewBox="11 1246 2150 28">
<g fill="#333"><rect x="17.2" y="1254.4" width="1.7" height="10.2"/><path d="M24.6 1254.4v10.2l-5.6-5.1z"/><path d="M30.4 1254.4v10.2l-5.6-5.1z"/>
<rect x="154.6" y="1254.4" width="1.7" height="10.2"/><path d="M143.2 1254.4v10.2l5.6-5.1z"/><path d="M148.9 1254.4v10.2l5.6-5.1z"/></g>
<path d="M170 1254.2h11v2.6c0 1-3.4 2-3.4 3v4.8h-4.2v-4.8c0-1-3.4-2-3.4-3z" fill="#f57c00"/><rect x="171.8" y="1255.6" width="7.4" height="1.3" fill="#ffe0b0"/>
<g fill="none" stroke="#505050" stroke-width="2.6"><path d="M280.4 1254.2l-5.6 5.1l5.6 5.1"/><path d="M2118 1254.2l5.6 5.1l-5.6 5.1"/></g>
</svg>
<div class="t" style="left:47.30px;letter-spacing:0.033px;top:1250.8px;">13 из 1943</div>
<div class="a" style="left:9.8px;top:1282.4px;width:187.2px;height:34.4px;box-sizing:border-box;border:1.8px solid #111;background:#eeeeee"></div>
<div class="a" style="left:199.8px;top:1282.4px;width:187.6px;height:34.4px;box-sizing:border-box;border:1.8px solid #2a8be0;background:#fdd2a8"></div>
<div class="t" style="left:13.20px;letter-spacing:0.267px;top:1289.6px;">Головна</div>
<div class="t" style="left:202.90px;letter-spacing:0.386px;top:1289.6px;">Замовлення від поку ...</div>
<div class="a" style="left:5.2px;top:1320.4px;width:2159px;height:1.5px;background:#dedede"></div>
<div class="a" style="left:718.8px;top:589.9px;width:518.2px;height:290.5px;box-sizing:border-box;border:1.5px solid #a0a0a0;background:#f1f1f1"></div>
<div class="a" style="left:767.4px;top:696.3px;width:464.8px;height:1.5px;background:#d7d7d7"></div>
<div class="a" style="left:722.1px;top:702.1px;width:515.6px;height:38px;box-sizing:border-box;border:4.2px solid #ff0000;border-radius:2.5px;background:#91c9f7"></div>
<div class="cm" style="left:770.30px;letter-spacing:0.000px;top:599.4px;color:#9d9d9d;">Додати</div>
<div class="cm" style="right:962.7px;top:599.4px;color:#9d9d9d;">Ins</div>
<div class="cm" style="left:769.30px;letter-spacing:-0.178px;top:632.8px;color:#000;font-weight:bold;">Редагувати</div>
<div class="cm" style="right:962.7px;top:632.8px;color:#000;font-weight:bold;">F4</div>
<div class="cm" style="left:769.30px;letter-spacing:0.069px;top:665.5px;color:#9d9d9d;">Видалити рядок</div>
<div class="cm" style="right:962.7px;top:665.5px;color:#9d9d9d;">Del</div>
<div class="cm" style="left:769.30px;letter-spacing:0.105px;top:707.5px;color:#000;">Скасувати замовлення</div>
<div class="cm" style="left:769.30px;letter-spacing:0.208px;top:749.6px;color:#000;">Відкрийте чек</div>
<div class="cm" style="left:769.30px;letter-spacing:0.170px;top:782.4px;color:#000;">Відкрити відкладений чек</div>
<div class="cm" style="left:769.30px;letter-spacing:0.111px;top:815.5px;color:#8e8e8e;">Відкрийте замовлення для постачальника</div>
<div class="cm" style="left:769.30px;letter-spacing:0.300px;top:848.6px;color:#8e8e8e;">Відкрийте комбіноване замовлення постачальнику</div>
<svg class="a" style="left:720px;top:592px" width="48" height="286" viewBox="720 592 48 286">
<g transform="translate(739.90,610.90) rotate(0)"><path d="M-3.00 -10.30h6.00v7.30h7.30v6.00h-7.30v7.30h-6.00v-7.30h-7.30v-6.00h7.30z" fill="#b4dcb2" stroke="#9fd09c" stroke-width="1.0" stroke-linejoin="round"/></g><g transform="translate(727.80,655.70) rotate(-44.17)"><path d="M0 0L6.49 -3.10L6.49 3.10Z" fill="#f1c6a2"/><path d="M0 0L2.73 -1.30L2.73 1.30Z" fill="#333"/><rect x="6.49" y="-3.10" width="20.84" height="6.20" fill="#f1c73f"/><rect x="6.49" y="-3.10" width="20.84" height="1.86" fill="#f8de7c"/><rect x="6.49" y="1.49" width="20.84" height="1.61" fill="#d8a21e"/><rect x="27.33" y="-3.10" width="3.07" height="6.20" fill="#c4c4c4"/><rect x="27.33" y="-3.10" width="3.07" height="2.17" fill="#e8e8e8"/><path d="M30.40 -3.10H31.06a3.10 3.10 0 0 1 0 6.20H30.40z" fill="#ee7878"/></g><g transform="translate(739.90,677.00) rotate(45)"><path d="M-2.60 -12.30h5.20v9.70h9.70v5.20h-9.70v9.70h-5.20v-9.70h-9.70v-5.20h9.70z" fill="#f4b9b0" stroke="#eca79d" stroke-width="1.0" stroke-linejoin="round"/></g><circle cx="740.2" cy="719.0" r="8.7" fill="none" stroke="#9f7b98" stroke-width="3.3"/><path d="M733.8 725.2l12.8-12.4" stroke="#9f7b98" stroke-width="3.6"/><g transform="translate(728.00,750.60)" opacity="1.00"><rect x="0.8" y="0.8" width="20.9" height="17.8" rx="1.6" fill="#fff" stroke="#7098d6" stroke-width="1.6"/><path d="M1.6 1.6h19.3v3.2h-19.3z" fill="#8db3e8"/><rect x="3.2" y="5.90" width="4.3" height="1.4" fill="#c4c4c4"/><rect x="9.1" y="5.90" width="4.3" height="1.4" fill="#b4b4b4"/><rect x="15.0" y="5.90" width="4.3" height="1.4" fill="#9c9c9c"/><rect x="3.2" y="8.95" width="4.3" height="1.4" fill="#c4c4c4"/><rect x="9.1" y="8.95" width="4.3" height="1.4" fill="#b4b4b4"/><rect x="15.0" y="8.95" width="4.3" height="1.4" fill="#9c9c9c"/><rect x="3.2" y="12.00" width="4.3" height="1.4" fill="#c4c4c4"/><rect x="9.1" y="12.00" width="4.3" height="1.4" fill="#b4b4b4"/><rect x="15.0" y="12.00" width="4.3" height="1.4" fill="#9c9c9c"/><rect x="3.2" y="15.05" width="4.3" height="1.4" fill="#c4c4c4"/><rect x="9.1" y="15.05" width="4.3" height="1.4" fill="#b4b4b4"/><rect x="15.0" y="15.05" width="4.3" height="1.4" fill="#9c9c9c"/></g><g transform="translate(728.00,783.50)" opacity="1.00"><rect x="0.8" y="0.8" width="20.9" height="17.8" rx="1.6" fill="#fff" stroke="#7098d6" stroke-width="1.6"/><path d="M1.6 1.6h19.3v3.2h-19.3z" fill="#8db3e8"/><rect x="3.2" y="5.90" width="4.3" height="1.4" fill="#c4c4c4"/><rect x="9.1" y="5.90" width="4.3" height="1.4" fill="#b4b4b4"/><rect x="15.0" y="5.90" width="4.3" height="1.4" fill="#9c9c9c"/><rect x="3.2" y="8.95" width="4.3" height="1.4" fill="#c4c4c4"/><rect x="9.1" y="8.95" width="4.3" height="1.4" fill="#b4b4b4"/><rect x="15.0" y="8.95" width="4.3" height="1.4" fill="#9c9c9c"/><rect x="3.2" y="12.00" width="4.3" height="1.4" fill="#c4c4c4"/><rect x="9.1" y="12.00" width="4.3" height="1.4" fill="#b4b4b4"/><rect x="15.0" y="12.00" width="4.3" height="1.4" fill="#9c9c9c"/><rect x="3.2" y="15.05" width="4.3" height="1.4" fill="#c4c4c4"/><rect x="9.1" y="15.05" width="4.3" height="1.4" fill="#b4b4b4"/><rect x="15.0" y="15.05" width="4.3" height="1.4" fill="#9c9c9c"/></g><g transform="translate(728.00,816.60)" opacity="0.45"><rect x="0.8" y="0.8" width="20.9" height="17.8" rx="1.6" fill="#fff" stroke="#7098d6" stroke-width="1.6"/><path d="M1.6 1.6h19.3v3.2h-19.3z" fill="#8db3e8"/><rect x="3.2" y="5.90" width="4.3" height="1.4" fill="#c4c4c4"/><rect x="9.1" y="5.90" width="4.3" height="1.4" fill="#b4b4b4"/><rect x="15.0" y="5.90" width="4.3" height="1.4" fill="#9c9c9c"/><rect x="3.2" y="8.95" width="4.3" height="1.4" fill="#c4c4c4"/><rect x="9.1" y="8.95" width="4.3" height="1.4" fill="#b4b4b4"/><rect x="15.0" y="8.95" width="4.3" height="1.4" fill="#9c9c9c"/><rect x="3.2" y="12.00" width="4.3" height="1.4" fill="#c4c4c4"/><rect x="9.1" y="12.00" width="4.3" height="1.4" fill="#b4b4b4"/><rect x="15.0" y="12.00" width="4.3" height="1.4" fill="#9c9c9c"/><rect x="3.2" y="15.05" width="4.3" height="1.4" fill="#c4c4c4"/><rect x="9.1" y="15.05" width="4.3" height="1.4" fill="#b4b4b4"/><rect x="15.0" y="15.05" width="4.3" height="1.4" fill="#9c9c9c"/></g><g transform="translate(728.00,849.60)" opacity="0.45"><rect x="0.8" y="0.8" width="20.9" height="17.8" rx="1.6" fill="#fff" stroke="#7098d6" stroke-width="1.6"/><path d="M1.6 1.6h19.3v3.2h-19.3z" fill="#8db3e8"/><rect x="3.2" y="5.90" width="4.3" height="1.4" fill="#c4c4c4"/><rect x="9.1" y="5.90" width="4.3" height="1.4" fill="#b4b4b4"/><rect x="15.0" y="5.90" width="4.3" height="1.4" fill="#9c9c9c"/><rect x="3.2" y="8.95" width="4.3" height="1.4" fill="#c4c4c4"/><rect x="9.1" y="8.95" width="4.3" height="1.4" fill="#b4b4b4"/><rect x="15.0" y="8.95" width="4.3" height="1.4" fill="#9c9c9c"/><rect x="3.2" y="12.00" width="4.3" height="1.4" fill="#c4c4c4"/><rect x="9.1" y="12.00" width="4.3" height="1.4" fill="#b4b4b4"/><rect x="15.0" y="12.00" width="4.3" height="1.4" fill="#9c9c9c"/><rect x="3.2" y="15.05" width="4.3" height="1.4" fill="#c4c4c4"/><rect x="9.1" y="15.05" width="4.3" height="1.4" fill="#b4b4b4"/><rect x="15.0" y="15.05" width="4.3" height="1.4" fill="#9c9c9c"/></g></svg>
<svg class="a" style="left:540px;top:596px" width="200" height="140" viewBox="540 596 200 140"><polygon points="545.81,602.69 717.91,721.13 721.90,715.14 546.19,602.11" fill="#ff0000"/><path d="M715.9 707.4L723.0 720.2L706.9 719.9" fill="none" stroke="#ff0000" stroke-width="4.4" stroke-linecap="round" stroke-linejoin="miter"/></svg>
</body></html>
